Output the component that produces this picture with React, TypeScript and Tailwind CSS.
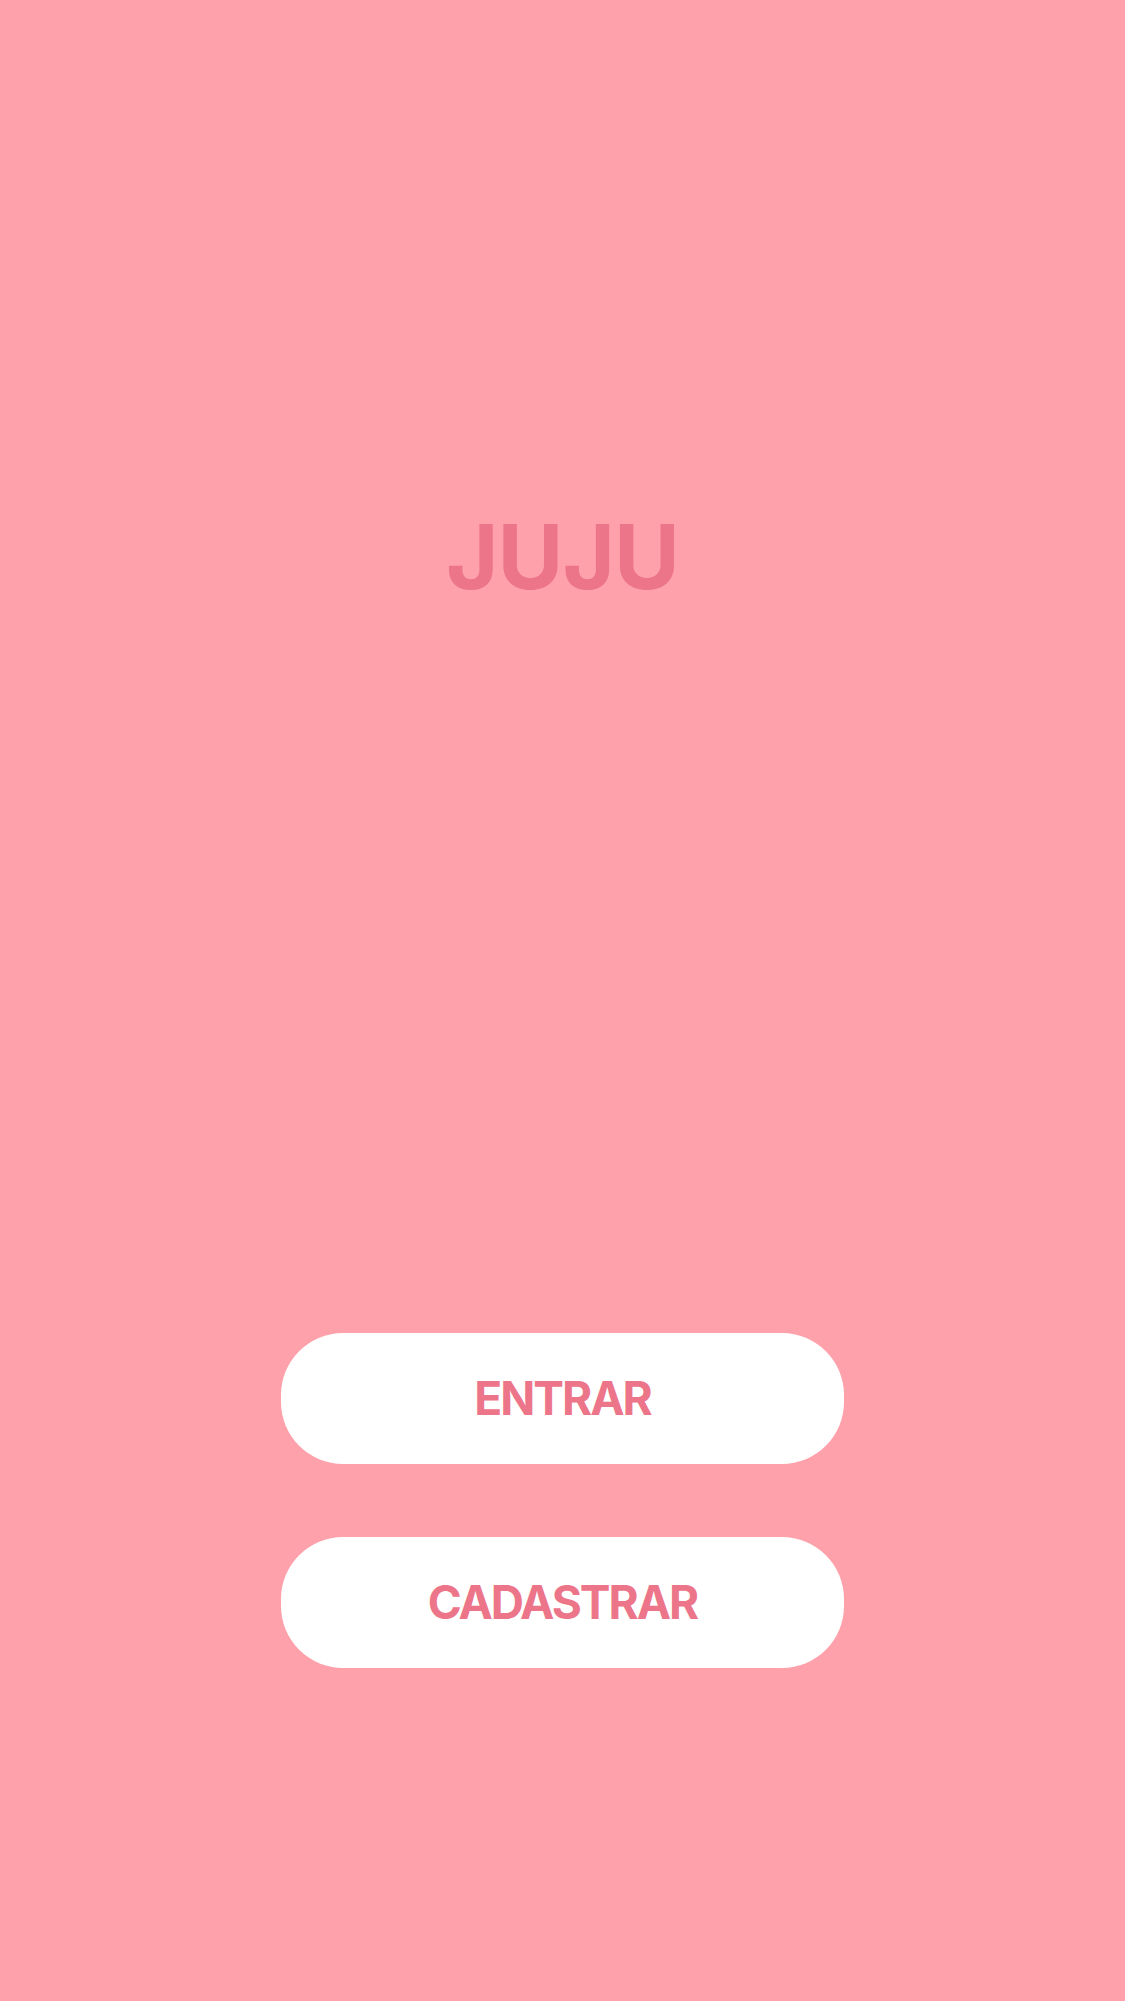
import React from "react";

const App = () => {
  return (
    <div
      className="w-full h-[2001px] bg-[#fea1ab] flex flex-col items-center"
      style={{ fontFamily: "Inter, 'Noto Sans', sans-serif" }}
    >
      <h1 className="mt-[512px] text-[90px] leading-none font-bold text-[#ec7589] tracking-[-1px]">
        JUJU
      </h1>

      <div className="mt-[731px] flex flex-col gap-[73px]">
        <button className="w-[563px] h-[131px] rounded-[62px] bg-white text-[#ec7589] text-[46px] font-bold tracking-[-2px] flex items-center justify-center">
          ENTRAR
        </button>
        <button className="w-[563px] h-[131px] rounded-[62px] bg-white text-[#ec7589] text-[46px] font-bold tracking-[-2px] flex items-center justify-center">
          CADASTRAR
        </button>
      </div>
    </div>
  );
};

export default App;
